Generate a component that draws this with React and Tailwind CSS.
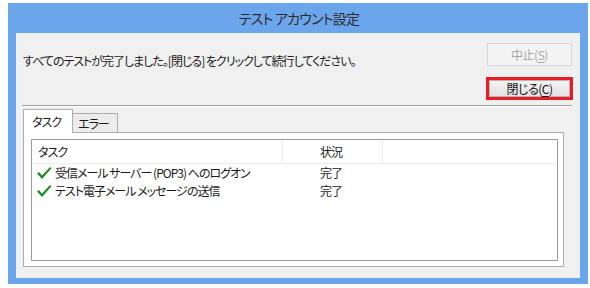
import React from 'react';

// チェックマーク（緑）
const Check = () => (
  <svg width="16" height="14" viewBox="0 0 16 14" className="shrink-0">
    <path d="M1 7.5 L3 6 L6 9.5 L14 1 L15.5 2.3 L6 13 Z" fill="#1f8a2c" />
  </svg>
);

const rows = [
  { task: '受信メール サーバー (POP3) へのログオン', status: '完了' },
  { task: 'テスト電子メール メッセージの送信', status: '完了' },
];

const App = () => {
  return (
    <div className="w-[590px] h-[288px] bg-white pt-[3px] pl-[8px] font-['Noto_Sans_CJK_JP',sans-serif] [font-feature-settings:'palt'] text-[12px] tracking-[-1px] text-[#1a1a1a]">
      {/* ウィンドウ枠 */}
      <div className="w-[580px] h-[281px] bg-[#6ba6ec] flex flex-col px-[8px] pb-[6px]">
        {/* タイトルバー */}
        <div className="h-[30px] flex items-center justify-center text-[14px] text-[#2b2b2b] tracking-[-0.8px] pl-[2px]">
          テスト アカウント設定
        </div>

        {/* クライアント領域 */}
        <div className="flex-1 bg-[#f0f0f0] flex flex-col px-[7px]">
          <div className="flex justify-between pt-[10px]">
            <div className="pt-[11px] leading-[14px]">
              すべてのテストが完了しました。[閉じる] をクリックして続行してください。
            </div>
            <div className="flex flex-col items-end mr-[1px]">
              <button className="w-[85px] h-[23px] border border-[#d5d5d5] bg-[#f4f4f4] text-[#a6a6a6] tracking-[-0.5px] flex items-center justify-center">
                中止(<span className="underline underline-offset-2">S</span>)
              </button>
              <div className="mt-[11px] mr-[-1px] border-[3px] border-[#ec1c24] w-[87px] h-[23px]">
                <button className="w-full h-full border border-[#b5b5b5] bg-gradient-to-b from-[#f2f2f2] to-[#e3e3e3] text-[#111] tracking-[-0.5px] flex items-center justify-center">
                  閉じる(<span className="underline underline-offset-2">C</span>)
                </button>
              </div>
            </div>
          </div>

          {/* 区切り線 */}
          <div className="mt-[5px] mr-[1px] ml-[-1px] h-px bg-[#a0a0a0] border-b border-white box-content" />

          {/* タブ */}
          <div className="flex items-end mt-[2px] h-[24px]">
            <div className="relative z-10 w-[50px] h-[24px] bg-white border border-[#adadad] border-b-0 flex items-center pl-[8px]">
              タスク
            </div>
            <div className="w-[45px] h-[20px] bg-[#ececec] border border-[#adadad] border-l-0 border-b-0 flex items-center pl-[5px]">
              エラー
            </div>
          </div>

          {/* タブのページ */}
          <div className="mt-[-1px] mr-[9px] h-[135px] bg-white border border-[#adadad] pt-[6px] pl-[7px] pr-[5px] pb-[5px]">
            <div className="h-full border border-[#9a9a9a] bg-white flex flex-col">
              <div className="h-[24px] flex border-b border-[#ececec] text-[#1a1a1a]">
                <div className="w-[251px] border-r border-[#eaeaea] flex items-center pl-[6px]">タスク</div>
                <div className="w-[100px] border-r border-[#eaeaea] flex items-center pl-[37px]">状況</div>
              </div>
              {rows.map((r) => (
                <div key={r.task} className="h-[18px] flex items-center">
                  <div className="w-[251px] flex items-center pl-[4px] gap-[3px]">
                    <Check />
                    <span>{r.task}</span>
                  </div>
                  <div className="pl-[37px]">{r.status}</div>
                </div>
              ))}
            </div>
          </div>
        </div>
      </div>
    </div>
  );
};

export default App;
